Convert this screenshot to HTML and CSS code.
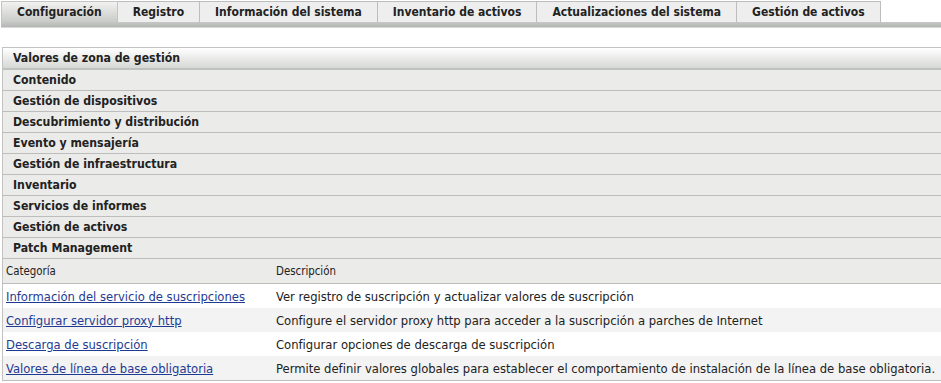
FILE: index.html
```html
<!DOCTYPE html>
<html lang="es">
  <head>
    <meta charset="UTF-8" />
    <title>Configuración - Patch Management</title>
    <link rel="stylesheet" href="styles.css">
  </head>
  <body>
    <!-- Tabs -->
    <div class="tabs">
      <ul class="tab-list">
        <li class="tab tab-active">Configuración</li>
        <li class="tab">Registro</li>
        <li class="tab">Información del sistema</li>
        <li class="tab">Inventario de activos</li>
        <li class="tab">Actualizaciones del sistema</li>
        <li class="tab">Gestión de activos</li>
      </ul>
      <div class="tab-bar"></div>
    </div>

    <!-- Settings panel -->
    <div class="panel">
      <div class="panel-head">Valores de zona de gestión</div>
      <div class="group">Contenido</div>
      <div class="group">Gestión de dispositivos</div>
      <div class="group">Descubrimiento y distribución</div>
      <div class="group">Evento y mensajería</div>
      <div class="group">Gestión de infraestructura</div>
      <div class="group">Inventario</div>
      <div class="group">Servicios de informes</div>
      <div class="group">Gestión de activos</div>
      <div class="group">Patch Management</div>

      <table class="settings">
        <thead>
          <tr>
            <th class="col-cat">Categoría</th>
            <th>Descripción</th>
          </tr>
        </thead>
        <tbody>
          <tr>
            <td><a href="#">Información del servicio de suscripciones</a></td>
            <td>Ver registro de suscripción y actualizar valores de suscripción</td>
          </tr>
          <tr>
            <td><a href="#">Configurar servidor proxy http</a></td>
            <td>Configure el servidor proxy http para acceder a la suscripción a parches de Internet</td>
          </tr>
          <tr>
            <td><a href="#">Descarga de suscripción</a></td>
            <td>Configurar opciones de descarga de suscripción</td>
          </tr>
          <tr>
            <td><a href="#">Valores de línea de base obligatoria</a></td>
            <td>Permite definir valores globales para establecer el comportamiento de instalación de la línea de base obligatoria.</td>
          </tr>
        </tbody>
      </table>
    </div>
  </body>
</html>
```

FILE: styles.css
```css
/* Page */
body {
  margin: 0;
  padding: 1px 0 0 1px;
  font-family: "DejaVu Sans Condensed", "DejaVu Sans", sans-serif;
  font-size: 12.9px;
  color: #222;
  background: #fff;
  overflow: hidden;
}

/* Tabs */
.tab-list {
  display: flex;
  margin: 0;
  padding: 0;
  list-style: none;
}

.tab {
  height: 20px;
  line-height: 20px;
  padding: 0 15px;
  font-size: 12px;
  font-weight: bold;
  background: #eeeeee;
  border: 1px solid #bdbdbd;
  border-bottom: none;
  border-left: none;
}

.tab-active {
  background: linear-gradient(#f2f2f1, #c9cbc8);
  border-color: #c4c4c4;
  border-left: 1px solid #c4c4c4;
}

.tab-bar {
  height: 5px;
  background: linear-gradient(#c6c8c5, #b4b6b3);
  border-bottom: 1px solid #d8d8d8;
}

/* Panel */
.panel {
  margin: 19px 0 0 1px;
  border-top: 1px solid #c2c2c2;
  border-left: 1px solid #c2c2c2;
}

.panel-head {
  height: 20px;
  line-height: 20px;
  padding-left: 10px;
  font-size: 12.2px;
  font-weight: bold;
  background: linear-gradient(#ffffff, #d6d8d5);
  border-bottom: 2px solid #bfc1be;
}

.group {
  height: 20px;
  line-height: 20px;
  padding-left: 10px;
  font-size: 12.2px;
  font-weight: bold;
  background: #ebebe9;
  border-bottom: 1px solid #bdbdbd;
}

/* Settings table */
.settings {
  width: 100%;
  border-collapse: collapse;
}

.settings th {
  height: 24px;
  padding: 0 3px;
  text-align: left;
  font-weight: normal;
  font-size: 11.4px;
  background: #ebebe9;
  border-bottom: 1px solid #bdbdbd;
}

.settings th.col-cat,
.settings td:first-child {
  width: 264px;
}

.settings td {
  height: 24px;
  padding: 0 3px;
  white-space: nowrap;
}

.settings tbody tr:nth-child(even) td {
  background: #f3f3f3;
}

.settings tbody tr:last-child td {
  border-bottom: 1px solid #bdbdbd;
}

.settings a {
  color: #1f3a93;
}
```
